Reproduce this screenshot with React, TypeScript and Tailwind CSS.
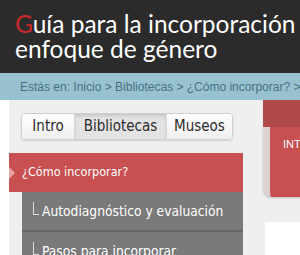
export default function App() {
  return (
    <div className="h-[255px] w-[300px] overflow-hidden bg-white">
      {/* Header */}
      <header className="h-[73px] bg-[#2b2b2b] pl-[15px] pt-[11px] whitespace-nowrap">
        <h1 className="font-['Lato',sans-serif] text-[24.5px] leading-[25px] text-white">
          <span className="text-[#cc2a2a]">G</span>uía para la incorporación
          <br />
          enfoque de género
        </h1>
      </header>

      {/* Breadcrumb */}
      <div className="flex h-[27px] items-center whitespace-nowrap bg-[#99c2d1] pl-[20px] font-['Liberation_Sans',Arial,sans-serif] text-[12px] text-[#457384]">
        Estás en: Inicio &gt; Bibliotecas &gt; ¿Cómo incorporar? &gt;
      </div>

      {/* Main */}
      <div className="flex">
        <div className="w-[9px] shrink-0 bg-white" />
        <div className="flex flex-1 bg-[#efefef] font-['DejaVu_Sans_Condensed','DejaVu_Sans',sans-serif]">
          {/* Left column */}
          <div className="w-[234px] shrink-0">
            <div className="pl-[12px] pt-[13px]">
              <div className="flex h-[27px] w-[212px] overflow-hidden rounded-[4px] border border-[#cfcfcf] text-[15px] text-[#2b2b2b] shadow-[0_1px_2px_rgba(0,0,0,0.12)]">
                <div className="flex w-[52px] items-center justify-center bg-gradient-to-b from-white to-[#efefef]">
                  Intro
                </div>
                <div className="flex w-[93px] items-center justify-center border-x border-[#d6d6d6] bg-[#e3e3e3] shadow-[inset_0_2px_3px_rgba(0,0,0,0.12)]">
                  Bibliotecas
                </div>
                <div className="flex flex-1 items-center justify-center bg-gradient-to-b from-white to-[#efefef]">
                  Museos
                </div>
              </div>
            </div>

            <div className="mt-[13px]">
              <div className="relative flex h-[39px] items-center bg-[#c85050] pl-[13px] text-[12.5px] text-white">
                <span className="absolute left-0 top-[14px] h-0 w-0 border-y-[6px] border-l-[6px] border-y-transparent border-l-[#e7a3a3]" />
                ¿Cómo incorporar?
              </div>
              <div className="ml-[13px]">
                {["Autodiagnóstico y evaluación", "Pasos para incorporar"].map((t) => (
                  <div
                    key={t}
                    className="flex h-[40px] items-center border-b-2 border-[#666] bg-[#7a7a7a] pl-[11px] text-[13.7px] text-white"
                  >
                    <span className="mr-[3px] mb-[6px] h-[13px] w-[6px] border-b border-l border-[#dcdcdc]" />
                    {t}
                  </div>
                ))}
              </div>
            </div>
          </div>

          {/* Right column */}
          <div className="ml-[20px] flex-1">
            <div className="h-[27px] bg-[#b04949]" />
            <div className="h-[70px] rounded-bl-[8px] border-l-[7px] border-[#dcd3d3] bg-[#c85050] pl-[13px] pt-[9px] font-['Liberation_Sans',Arial,sans-serif] text-[11px] text-white shadow-[0_1px_2px_rgba(0,0,0,0.2)]">
              INTRO
            </div>
            <div className="ml-[2px] mt-[25px] h-[60px] bg-white" />
          </div>
        </div>
      </div>
    </div>
  );
}
